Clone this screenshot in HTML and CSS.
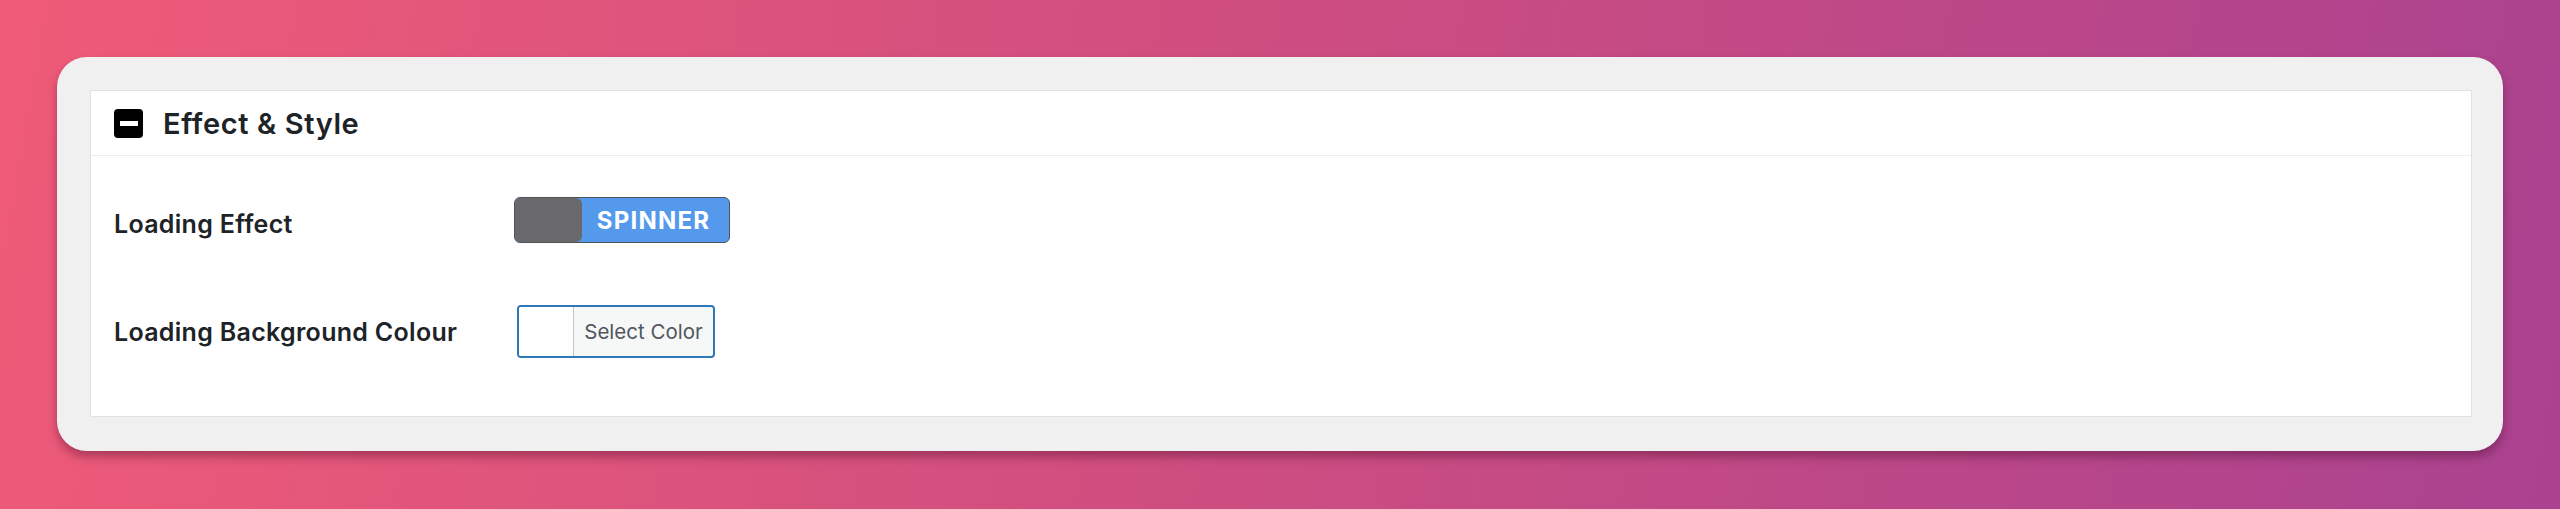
FILE: index.html
```html
<!DOCTYPE html>
<html lang="en">
<head>
  <meta charset="UTF-8">
  <title>Effect &amp; Style</title>
  <link rel="stylesheet" href="styles.css">
</head>
<body>

<div class="frame">
  <div class="panel">
    <div class="panel-head">
      <span class="toggle-icon"><span class="bar"></span></span>
      <h2>Effect &amp; Style</h2>
    </div>

    <div class="panel-body">
      <div class="row row-effect">
        <label class="label">Loading Effect</label>
        <div class="switch">
          <span class="knob"></span>
          <span class="switch-text">SPINNER</span>
        </div>
      </div>

      <div class="row row-colour">
        <label class="label">Loading Background Colour</label>
        <button class="color-btn" type="button">
          <span class="swatch"></span>
          <span class="color-text">Select Color</span>
        </button>
      </div>
    </div>
  </div>
</div>

</body>
</html>
```

FILE: styles.css
```css
body {
  margin: 0;
  height: 509px;
  padding: 57px;
  box-sizing: border-box;
  font-family: Inter, "Noto Sans", Arial, sans-serif;
  background: linear-gradient(100deg, #ef5b78 0%, #d04e7f 45%, #aa4290 100%);
  color: #1d2327;
}
.frame {
  background: #f0f0f1;
  border-radius: 30px;
  padding: 33px 31px 34px 33px;
  box-shadow: 0 6px 10px rgba(60,0,30,0.35);
}
.panel {
  background: #fff;
  border: 1px solid #e2e2e4;
}
.panel-head {
  display: flex;
  align-items: center;
  height: 64px;
  padding: 0 23px;
  border-bottom: 1px solid #ececee;
}
.toggle-icon {
  width: 29px;
  height: 29px;
  background: #000;
  border-radius: 4px;
  display: flex;
  align-items: center;
  justify-content: center;
}
.toggle-icon .bar {
  width: 18px;
  height: 5px;
  background: #fff;
}
h2 {
  margin: 0 0 0 20px;
  font-size: 29px;
  font-weight: 600;
  letter-spacing: 0.6px;
}
.panel-body {
  padding: 41px 23px 58px;
}
.row {
  display: flex;
  align-items: center;
}
.row-colour {
  margin-top: 62px;
}
.label {
  width: 400px;
  font-size: 25px;
  font-weight: 600;
  letter-spacing: 0.3px;
}
.row-effect .label {
  padding-top: 8px;
}
.switch {
  width: 214px;
  height: 44px;
  border: 1px solid #4f5257;
  border-radius: 6px;
  background: #5499eb;
  display: flex;
  align-items: center;
  overflow: hidden;
}
.knob {
  width: 67px;
  height: 100%;
  background: #69696b;
  border-radius: 5px 6px 6px 5px;
}
.switch-text {
  flex: 1;
  text-align: center;
  color: #fff;
  font-weight: 700;
  font-size: 24px;
  letter-spacing: 1.2px;
  padding-right: 4px;
}
.color-btn {
  margin-left: 3px;
  width: 198px;
  height: 53px;
  padding: 0;
  display: flex;
  align-items: stretch;
  border: 2px solid #2f78b8;
  border-radius: 4px;
  background: #f6f7f7;
  overflow: hidden;
  font-family: inherit;
}
.swatch {
  width: 54px;
  background: #fff;
  border-right: 1px solid #c3c4c7;
}
.color-text {
  flex: 1;
  display: flex;
  align-items: center;
  justify-content: center;
  font-size: 20.5px;
  color: #50575e;
}
```
